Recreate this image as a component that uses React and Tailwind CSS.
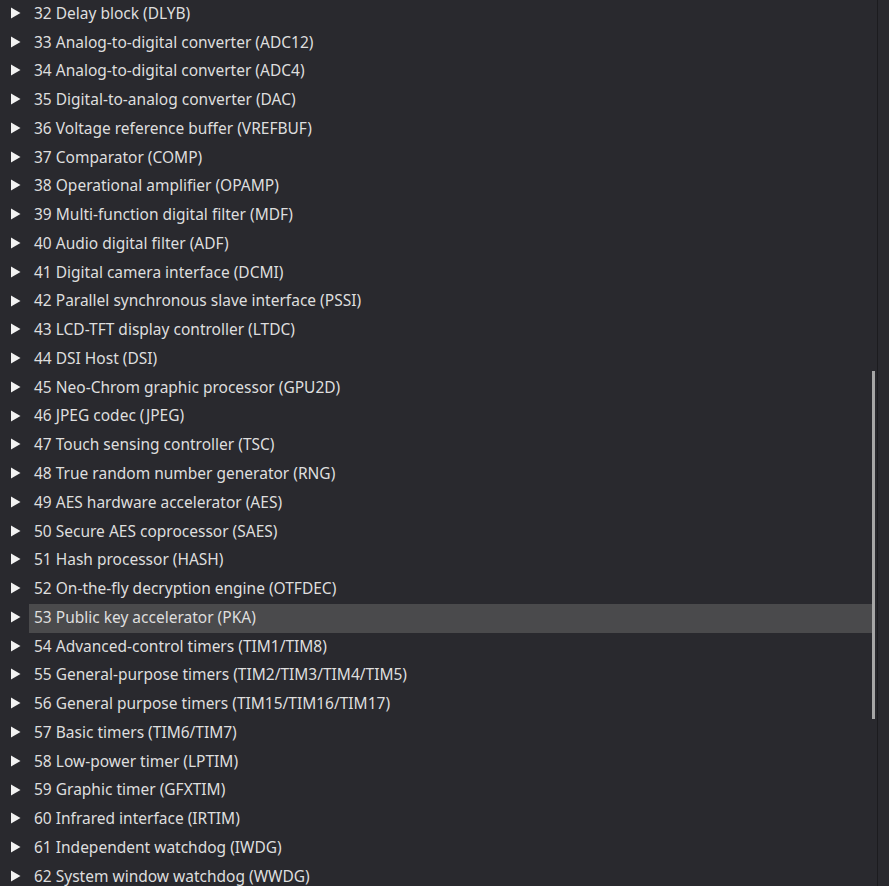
import { useState } from "react";

const sections = [
  "32 Delay block (DLYB)",
  "33 Analog-to-digital converter (ADC12)",
  "34 Analog-to-digital converter (ADC4)",
  "35 Digital-to-analog converter (DAC)",
  "36 Voltage reference buffer (VREFBUF)",
  "37 Comparator (COMP)",
  "38 Operational amplifier (OPAMP)",
  "39 Multi-function digital filter (MDF)",
  "40 Audio digital filter (ADF)",
  "41 Digital camera interface (DCMI)",
  "42 Parallel synchronous slave interface (PSSI)",
  "43 LCD-TFT display controller (LTDC)",
  "44 DSI Host (DSI)",
  "45 Neo-Chrom graphic processor (GPU2D)",
  "46 JPEG codec (JPEG)",
  "47 Touch sensing controller (TSC)",
  "48 True random number generator (RNG)",
  "49 AES hardware accelerator (AES)",
  "50 Secure AES coprocessor (SAES)",
  "51 Hash processor (HASH)",
  "52 On-the-fly decryption engine (OTFDEC)",
  "53 Public key accelerator (PKA)",
  "54 Advanced-control timers (TIM1/TIM8)",
  "55 General-purpose timers (TIM2/TIM3/TIM4/TIM5)",
  "56 General purpose timers (TIM15/TIM16/TIM17)",
  "57 Basic timers (TIM6/TIM7)",
  "58 Low-power timer (LPTIM)",
  "59 Graphic timer (GFXTIM)",
  "60 Infrared interface (IRTIM)",
  "61 Independent watchdog (IWDG)",
  "62 System window watchdog (WWDG)",
];

function Arrow() {
  return (
    <svg width="11" height="12" viewBox="0 0 11 12" className="shrink-0">
      <path d="M1 0.5 L10.5 6 L1 11.5 Z" fill="#f2f2f2" />
    </svg>
  );
}

export default function App() {
  const [selected, setSelected] = useState("53 Public key accelerator (PKA)");

  return (
    <div className="flex h-[886px] w-[889px] overflow-hidden bg-[#29292e] font-['Noto_Sans',sans-serif] text-[15.5px] text-[#dedede]">
      <div className="flex-1 overflow-hidden">
        {sections.map((label) => (
          <div key={label} className="flex h-[28.77px] items-center" onClick={() => setSelected(label)}>
            <div className="flex w-[29px] justify-center pl-[1px] pb-[3px]">
              <Arrow />
            </div>
            <div
              className={
                "flex h-full flex-1 items-center whitespace-nowrap pl-[5px] pb-[2px] " +
                (selected === label ? "bg-[#4a4a4c]" : "")
              }
            >
              {label}
            </div>
          </div>
        ))}
      </div>
      {/* scrollbar */}
      <div className="w-[5px] shrink-0">
        <div className="mt-[371px] h-[348px] w-[3px] bg-[#a6a6a6]" />
      </div>
      <div className="w-px shrink-0 bg-[#1c1c1f]" />
      <div className="w-[11px] shrink-0 bg-[#29292e]" />
    </div>
  );
}
